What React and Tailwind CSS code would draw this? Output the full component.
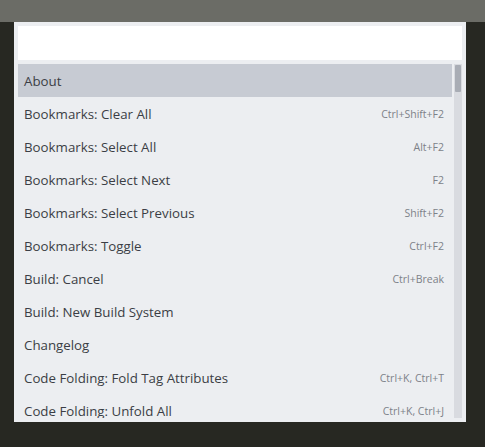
const items = [
  ['About', ''],
  ['Bookmarks: Clear All', 'Ctrl+Shift+F2'],
  ['Bookmarks: Select All', 'Alt+F2'],
  ['Bookmarks: Select Next', 'F2'],
  ['Bookmarks: Select Previous', 'Shift+F2'],
  ['Bookmarks: Toggle', 'Ctrl+F2'],
  ['Build: Cancel', 'Ctrl+Break'],
  ['Build: New Build System', ''],
  ['Changelog', ''],
  ['Code Folding: Fold Tag Attributes', 'Ctrl+K, Ctrl+T'],
  ['Code Folding: Unfold All', 'Ctrl+K, Ctrl+J'],
];

export default function App() {
  return (
    <div className="w-[485px] h-[447px] bg-[#272822] flex flex-col overflow-hidden" style={{ fontFamily: '"Open Sans", "Noto Sans", sans-serif' }}>
      <div className="h-[22px] bg-[#6b6c66] shrink-0" />
      <div className="ml-[14px] w-[452px] h-[400px] bg-[#eceef1] p-[4px] flex flex-col overflow-hidden">
        <div className="h-[34px] bg-white shrink-0" />
        <div className="mt-[4px] flex gap-[2px] flex-1 min-h-0">
          <div className="flex-1 overflow-hidden">
            {items.map(([label, key], i) => (
              <div
                key={label}
                className={`h-[33px] flex items-center justify-between pl-[6px] pr-[8px] pt-[2px] ${i === 0 ? 'bg-[#c7cbd3]' : ''}`}
              >
                <span className="text-[13.3px] text-[#3b3e45]">{label}</span>
                <span className="text-[10.5px] text-[#7d8188]">{key}</span>
              </div>
            ))}
          </div>
          <div className="w-[8px] bg-[#d9dbe0] relative">
            <div className="absolute left-[1px] right-[1px] top-[1px] h-[27px] bg-[#a9adb5] rounded-[1px]" />
          </div>
        </div>
      </div>
    </div>
  );
}
